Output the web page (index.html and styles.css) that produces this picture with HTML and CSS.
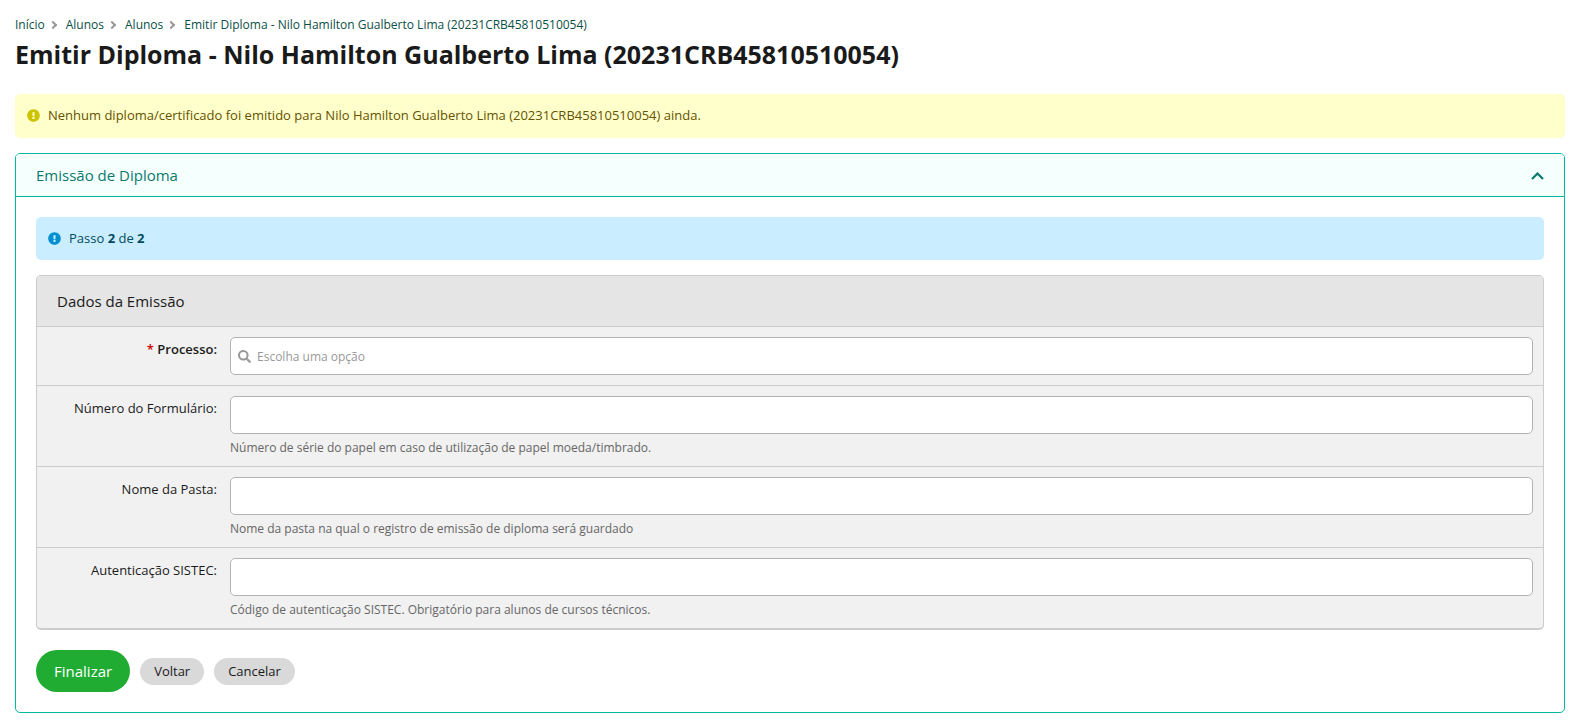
FILE: index.html
```html
<!DOCTYPE html>
<html lang="pt-br">
<head>
<meta charset="utf-8">
<title>Emitir Diploma</title>
<link rel="stylesheet" href="styles.css">
</head>
<body>
<main class="page">
  <nav aria-label="Navegação">
    <ul class="breadcrumbs">
      <li><a href="#">Início</a></li>
      <li><a href="#">Alunos</a></li>
      <li><a href="#">Alunos</a></li>
      <li><a href="#">Emitir Diploma - Nilo Hamilton Gualberto Lima (20231CRB45810510054)</a></li>
    </ul>
  </nav>
  <h1 class="title">Emitir Diploma - Nilo Hamilton Gualberto Lima (20231CRB45810510054)</h1>

  <p class="message message-alert">
    <svg class="message-icon" viewBox="0 0 512 512" aria-hidden="true"><path fill="currentColor" d="M504 256c0 137-111 248-248 248S8 393 8 256 119 8 256 8s248 111 248 248zm-248 50a46 46 0 1 0 0 92 46 46 0 0 0 0-92zm-44-165 8 136c0 6 5 11 12 11h48c7 0 12-5 12-11l8-136c0-7-5-13-12-13h-64c-7 0-12 6-12 13z"/></svg>
    <span>Nenhum diploma/certificado foi emitido para Nilo Hamilton Gualberto Lima (20231CRB45810510054) ainda.</span>
  </p>

  <section class="box">
    <header class="box-header">
      <h2 class="box-title">Emissão de Diploma</h2>
      <button class="toggle" type="button" aria-label="Recolher" aria-expanded="true">
        <svg viewBox="0 0 13 8" aria-hidden="true"><path d="M1 7 6.5 1.5 12 7" fill="none" stroke="currentColor" stroke-width="2.2"/></svg>
      </button>
    </header>
    <div class="box-body">
      <p class="message message-info">
        <svg class="message-icon" viewBox="0 0 512 512" aria-hidden="true"><path fill="currentColor" d="M504 256c0 137-111 248-248 248S8 393 8 256 119 8 256 8s248 111 248 248zm-248 50a46 46 0 1 0 0 92 46 46 0 0 0 0-92zm-44-165 8 136c0 6 5 11 12 11h48c7 0 12-5 12-11l8-136c0-7-5-13-12-13h-64c-7 0-12 6-12 13z"/></svg>
        <span>Passo <strong>2</strong> de <strong>2</strong></span>
      </p>
      <form>
        <section class="fields">
          <h3 class="fields-title">Dados da Emissão</h3>
          <div class="row">
            <label class="label required" for="processo">Processo:</label>
            <div class="search">
              <svg class="search-icon" viewBox="0 0 512 512" aria-hidden="true"><path fill="currentColor" d="M505 443 405 343c-4-4-11-7-17-7h-16a208 208 0 1 0-36 36v16c0 6 3 13 7 17l100 100c9 9 24 9 34 0l28-28c9-10 9-25 0-34zM208 336a128 128 0 1 1 0-256 128 128 0 0 1 0 256z"/></svg>
              <input class="search-input" id="processo" type="text" placeholder="Escolha uma opção" required>
            </div>
          </div>
          <div class="row">
            <label class="label" for="numero">Número do Formulário:</label>
            <div>
              <input class="input" id="numero" type="text" aria-describedby="numero-help">
              <p class="help" id="numero-help">Número de série do papel em caso de utilização de papel moeda/timbrado.</p>
            </div>
          </div>
          <div class="row">
            <label class="label" for="pasta">Nome da Pasta:</label>
            <div>
              <input class="input" id="pasta" type="text" aria-describedby="pasta-help">
              <p class="help" id="pasta-help">Nome da pasta na qual o registro de emissão de diploma será guardado</p>
            </div>
          </div>
          <div class="row">
            <label class="label" for="sistec">Autenticação SISTEC:</label>
            <div>
              <input class="input" id="sistec" type="text" aria-describedby="sistec-help">
              <p class="help" id="sistec-help">Código de autenticação SISTEC. Obrigatório para alunos de cursos técnicos.</p>
            </div>
          </div>
        </section>
        <div class="actions">
          <button class="button button-primary" type="submit">Finalizar</button>
          <button class="button" type="button">Voltar</button>
          <button class="button" type="button">Cancelar</button>
        </div>
      </form>
    </div>
  </section>
</main>
</body>
</html>
```
FILE: styles.css
```css
*, *::after {
  box-sizing: border-box;
}

body {
  margin: 0;
  background: #fff;
  color: #1a1a1a;
  font: 13px/18px "Open Sans", "Noto Sans", sans-serif;
}

h1, h2, h3, p, ul {
  margin: 0;
}

input, button {
  font-family: inherit;
}

.page {
  padding: 16px 9px 11px 15px;
}

.breadcrumbs {
  display: flex;
  padding: 0;
  list-style: none;
  font-size: 12px;
}

.breadcrumbs li {
  display: flex;
  align-items: center;
}

.breadcrumbs li:not(:last-child)::after {
  content: "";
  width: 6px;
  height: 6px;
  margin: 0 10px 0 5px;
  border: solid #999;
  border-width: 2px 2px 0 0;
  transform: rotate(45deg);
}

.breadcrumbs a {
  color: #0b4f46;
  text-decoration: none;
}

.title {
  margin-bottom: 20px;
  font-size: 25px;
  line-height: 40px;
  font-weight: 700;
}

.message {
  display: flex;
  align-items: center;
  gap: 8px;
  margin-bottom: 15px;
  padding: 12px 12px 13px;
  border-radius: 5px;
}

.message-icon {
  flex: none;
  width: 13px;
  height: 13px;
}

.message-alert {
  padding-bottom: 14px;
  background: #ffffcb;
  color: #665200;
}

.message-alert .message-icon {
  color: #ccc200;
}

.message-info {
  background: #caeeff;
  color: #024b5c;
}

.message-info .message-icon {
  color: #0090d2;
}

.box {
  border: 1px solid #02b8a2;
  border-radius: 5px;
}

.box-header {
  display: flex;
  align-items: center;
  justify-content: space-between;
  padding: 11px 20px;
  border-bottom: 1px solid #02b8a2;
  border-radius: 4px 4px 0 0;
  background: #f5fffe;
  color: #0b7a6c;
}

.box-title, .fields-title {
  font-size: 15px;
  line-height: 20px;
  font-weight: 400;
}

.toggle {
  display: flex;
  width: 13px;
  padding: 2px 0 0;
  border: 0;
  background: none;
  color: inherit;
}

.box-body {
  padding: 20px;
}

.fields {
  overflow: hidden;
  border: 1px solid #ccc;
  border-bottom-width: 2px;
  border-radius: 5px;
  background: #f1f1f1;
}

.fields-title {
  padding: 15px 20px;
  background: #e5e5e5;
}

.row {
  display: grid;
  grid-template-columns: 170px 1fr;
  column-gap: 13px;
  padding: 10px;
  border-top: 1px solid #ccc;
}

.label {
  padding-top: 3px;
  text-align: right;
}

.required {
  font-weight: 600;
}

.required::before {
  content: "* ";
  color: #c00;
}

.input, .search {
  display: block;
  width: 100%;
  height: 38px;
  border: 1px solid #b3b3b3;
  border-radius: 5px;
  background: #fff;
}

.input {
  padding: 0 8px;
}

.search {
  display: flex;
  align-items: center;
  gap: 6px;
  padding: 0 7px;
}

.search-icon {
  flex: none;
  width: 13px;
  height: 13px;
  color: #999;
}

.search-input {
  flex: 1;
  padding: 0;
  border: 0;
  outline: 0;
  background: none;
  font-size: 12px;
}

.search-input::placeholder {
  color: #999;
}

.help {
  padding-top: 6px;
  color: #666;
  font-size: 12px;
  line-height: 16px;
}

.actions {
  display: flex;
  align-items: center;
  gap: 10px;
  padding-top: 20px;
}

.button {
  padding: 4px 14px 5px;
  border: 0;
  border-radius: 21px;
  background: #d9d9d9;
  color: #1a1a1a;
  font-size: 13px;
  line-height: 18px;
}

.button-primary {
  padding: 11px 18px;
  background: #20ac33;
  color: #fff;
  font-size: 15px;
  line-height: 20px;
}
```
